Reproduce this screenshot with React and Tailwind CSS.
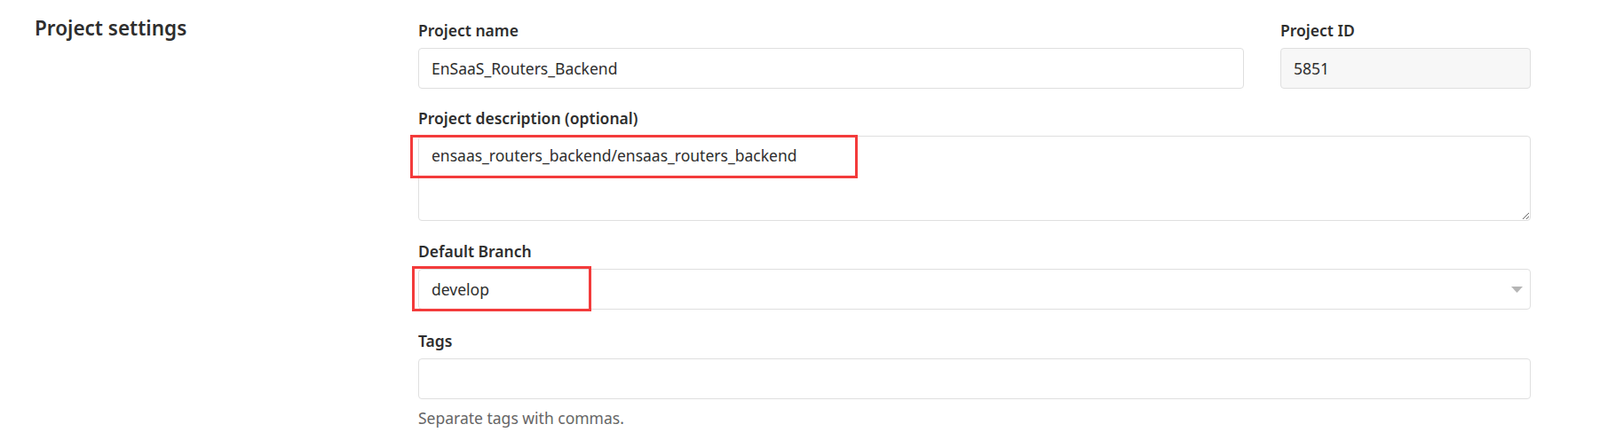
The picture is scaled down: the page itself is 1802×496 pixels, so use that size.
import React from 'react';

const labelCls = "block text-[17.5px] leading-[26px] font-semibold text-[#2e2e2e] mb-[7px]";
const inputCls = "block w-full h-[46px] rounded-[4px] border border-[#dfdfdf] px-[14px] text-[17.5px] text-[#2e2e2e] outline-none";

const App = () => {
    return (
        <div className="w-[1802px] h-[496px] flex bg-white overflow-hidden font-['Noto_Sans',sans-serif]">
            {/* Section title */}
            <div className="w-[471px] shrink-0 pl-[39px] pt-[17px]">
                <h4 className="text-[22.5px] leading-[30px] font-semibold text-[#2e2e2e]">Project settings</h4>
            </div>

            <form className="w-[1253px] shrink-0 pt-[21px]">
                {/* Name + ID */}
                <div className="flex gap-[41px] mb-[20px]">
                    <div className="flex-1">
                        <label className={labelCls}>Project name</label>
                        <input type="text" readOnly defaultValue="EnSaaS_Routers_Backend" className={inputCls + " bg-white"} />
                    </div>
                    <div className="w-[282px]">
                        <label className={labelCls}>Project ID</label>
                        <input type="text" readOnly defaultValue="5851" className={inputCls + " bg-[#f7f7f7]"} />
                    </div>
                </div>

                {/* Description */}
                <div className="mb-[21px]">
                    <label className={labelCls}>Project description (optional)</label>
                    <div className="relative">
                        <textarea
                            readOnly
                            defaultValue="ensaas_routers_backend/ensaas_routers_backend"
                            className="block w-full h-[96px] rounded-[4px] border border-[#dfdfdf] bg-white px-[14px] pt-[8px] text-[17.5px] leading-[26px] text-[#2e2e2e] outline-none resize-y"
                        />
                        <div className="absolute left-[-9px] top-[-1px] w-[504px] h-[49px] border-[3px] border-[#f33b3b] pointer-events-none" />
                    </div>
                </div>

                {/* Default branch */}
                <div className="mb-[22px]">
                    <label className={labelCls}>Default Branch</label>
                    <div className="relative h-[46px] flex items-center rounded-[4px] border border-[#dfdfdf] bg-white px-[14px] text-[17.5px] text-[#2e2e2e]">
                        <span>develop</span>
                        <svg className="absolute right-[8px] top-[19px]" width="13" height="7" viewBox="0 0 13 7">
                            <path d="M0 0 L13 0 L6.5 7 Z" fill="#b5b5b5" />
                        </svg>
                        <div className="absolute left-[-8px] top-[-4px] w-[202px] h-[51px] border-[3px] border-[#f33b3b] pointer-events-none" />
                    </div>
                </div>

                {/* Tags */}
                <div>
                    <label className={labelCls}>Tags</label>
                    <input type="text" readOnly className={inputCls + " bg-white"} />
                    <p className="mt-[8px] text-[17.5px] leading-[26px] text-[#666666]">Separate tags with commas.</p>
                </div>
            </form>
        </div>
    );
};

export default App;
